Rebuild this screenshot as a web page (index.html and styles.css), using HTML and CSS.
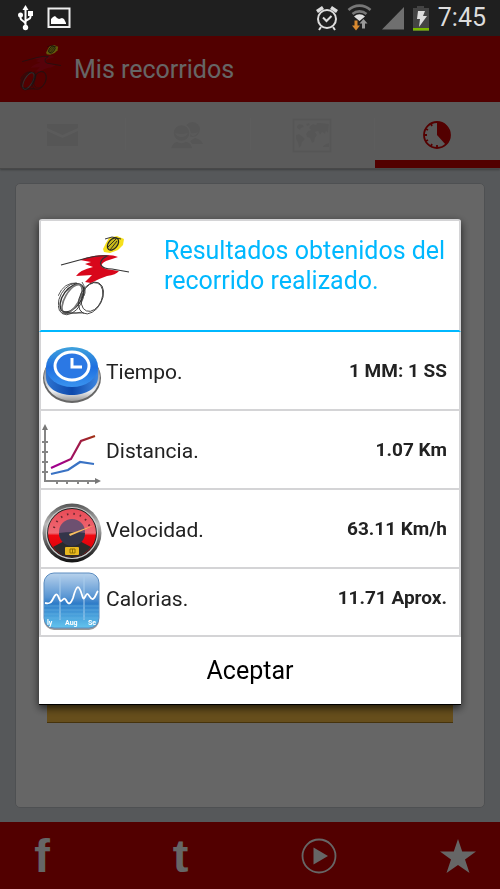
FILE: index.html
```html
<!DOCTYPE html>
<html lang="es">
<head>
    <meta charset="UTF-8">
    <meta name="viewport" content="width=device-width, initial-scale=1.0">
    <title>Mis recorridos</title>
    <link rel="stylesheet" href="styles.css">
</head>
<body>
    <div class="status-bar">
        <div class="status-group">
            <!-- USB -->
            <svg width="18" height="28" viewBox="0 0 18 28" fill="none" stroke="#fff" stroke-width="2">
                <path d="M8.500 4v18M3.500 11v3c0 3 5 3 5 6M13.500 10v3c0 3-5 2-5 5" />
                <path d="M8.500 1l3 5h-6z" fill="#fff" stroke="none" />
                <circle cx="3.500" cy="11" r="2.500" fill="#fff" stroke="none" />
                <rect x="11" y="7" width="5" height="5" fill="#fff" stroke="none" />
                <circle cx="8.500" cy="23.500" r="2.700" fill="#fff" stroke="none" />
            </svg>
            <!-- Picture -->
            <svg width="24" height="22" viewBox="0 0 24 22">
                <rect x="1.500" y="1.500" width="21" height="18.500" fill="none" stroke="#eee" stroke-width="2" />
                <path d="M4 17v-5l2-2 2-1 2 2 2 1 3-1 2 1 2 4v1z" fill="#fff" />
            </svg>
        </div>
        <div class="status-group status-right">
            <!-- Alarm -->
            <svg width="24" height="26" viewBox="0 0 24 26" fill="none" stroke="#ddd" stroke-width="2">
                <circle cx="13" cy="14" r="9" />
                <path d="M9 12.500l3.500 3.500 5-5M7 22l-2 3M19 22l2 3" />
                <path d="M3 6.500l6-4M23 6.500l-6-4" stroke-width="3.500" />
            </svg>
            <!-- Wifi -->
            <svg class="wifi" width="26" height="28" viewBox="0 0 26 28" fill="none" stroke="#777" stroke-width="2.600">
                <path d="M2.500 6a16 16 0 0 1 22 0" />
                <path d="M6.500 10a10.500 10.500 0 0 1 14 0" />
                <path d="M8 12.500a8 8 0 0 1 11 0l-5.500 4.500z" fill="#ddd" stroke="none" />
                <path d="M8.500 16.500h3v5h2.500l-4 5-4-5h2.500z" fill="#d98a30" stroke="none" />
                <path d="M16 24.500h3v-5h2.500l-4-4.500-4 4.500h2.500z" fill="#999" stroke="none" />
            </svg>
            <!-- Signal -->
            <svg width="24" height="24" viewBox="0 0 24 24">
                <path d="M2 23.500L24 1v22.500z" fill="#6f6f6f" />
            </svg>
            <!-- Battery -->
            <svg width="18" height="26" viewBox="0 0 18 26">
                <path d="M5 1h7v2h5v23H1V3h4z" fill="#444" />
                <path d="M6 6h7l-2 5h4l-8 11 1-8H5z" fill="#ddd" />
                <rect x="1" y="23" width="16" height="2.500" fill="#7ab800" />
            </svg>
            <span class="clock">7:45</span>
        </div>
    </div>

    <div class="screen">
        <header class="header">
            <svg class="header-logo" width="42" height="48" viewBox="0 0 72 84"><use href="#cyclist" /></svg>
            <h1>Mis recorridos</h1>
        </header>

        <nav class="tabs">
            <button class="tab" aria-label="Mensajes">
                <svg width="32" height="24" viewBox="0 0 32 24" fill="#d6d6d6">
                    <path d="M0 1h31v4l-15.500 7L0 5z" />
                    <path d="M0 8l15.500 7L31 8v15H0z" />
                </svg>
            </button>
            <button class="tab" aria-label="Amigos">
                <svg width="36" height="28" viewBox="0 0 36 28" fill="#d6d6d6">
                    <circle cx="22.500" cy="8.500" r="7.500" />
                    <path d="M20 20l5-3q6 1 8 6H22z" />
                    <g stroke="#e4e4e4" stroke-width="1.400">
                        <circle cx="11.500" cy="12" r="8.500" />
                        <path d="M0 28q2-7 7-8 4 3 9 0 6 1 7 8z" />
                    </g>
                    <path d="M5 12q6 2 13 0-2 4-6.500 4T5 12zM20 12q5 1 8-1-2 4-6 4z" fill="#e2e2e2" />
                </svg>
            </button>
            <button class="tab" aria-label="Mapa">
                <svg width="42" height="35" viewBox="0 0 42 35" fill="#d8d8d8">
                    <rect x="1.500" y="1.500" width="37" height="32" fill="none" stroke="#d8d8d8" stroke-width="2" />
                    <path d="M5 8l2-2 4 1 1 2-3 1-1 2-3-2zM14 6l3-1 1 2-3 1zM4 17l3-1 3 2 3 3-3 3-1 4-2 2-1-5-2-4zM18 8l3-2 3 1 1-2h4l8 1-1 9-2-2-1 3-3-2-2 3-2-4-3 1 2 3-2 3-1 4-2 1-2-5-3-1-1-3 2-3 3-1-2-2zM31 28l3-2 3-1v4h-6z" />
                </svg>
            </button>
            <button class="tab tab-active" aria-label="Tiempo">
                <svg width="30" height="28" viewBox="0 0 30 28">
                    <circle cx="14" cy="14" r="13" fill="none" stroke="#d00000" stroke-width="1.800" />
                    <path d="M14 14V1a13 13 0 0 1 8.500 22.500z" fill="#d00000" />
                    <path d="M1 14h3M14 27v-3M3 8l2 1M8 3l1 2M3 20l2-1M8 25l1-2" stroke="#d00000" stroke-width="1.800" />
                </svg>
            </button>
        </nav>

        <main class="content">
            <div class="card">
                <div class="card-bar"></div>
            </div>
        </main>

        <footer class="footer">
            <a href="#" aria-label="Facebook"><span class="social">f</span></a>
            <a href="#" aria-label="Twitter"><span class="social">t</span></a>
            <a href="#" aria-label="Video">
                <svg width="36" height="36" viewBox="0 0 36 36">
                    <circle cx="18" cy="18" r="16.500" fill="none" stroke="#fff" stroke-width="1.800" />
                    <path d="M12.500 9.500v17L27 18z" fill="#fff" />
                </svg>
            </a>
            <a href="#" aria-label="Favoritos">
                <svg width="36" height="36" viewBox="0 0 36 36">
                    <path d="M18 1l4.200 12.500H36L25 21.500 29.500 35 18 27 6.500 35 11 21.500 0 13.500h13.800z" fill="#fff" />
                </svg>
            </a>
        </footer>
    </div>

    <div class="overlay">
        <div class="modal" role="dialog" aria-modal="true" aria-labelledby="modalTitle">
            <div class="modal-header">
                <svg class="modal-logo" width="72" height="84" viewBox="0 0 72 84">
                    <g id="cyclist">
                        <path d="M45 13l3-6 3-5 8-2 7 3-1 6-5 5-8 3-6-1z" fill="#f6e01c" />
                        <ellipse cx="55" cy="8" rx="7" ry="4.500" transform="rotate(-50 55 8)" fill="#c8b81a" stroke="#222" stroke-width="1.200" />
                        <path d="M47 3l7-2 9 2M49 12l9-9M52 14l7-9" fill="none" stroke="#222" stroke-width="0.900" />
                        <path d="M22 24q12-5 26-5 8 0 12 2l-12 4q-6 3-4 6l4 2 13 2q-3 4-12 5-9 3-16 7l-6-1 7-7-16 1q4-6 17-9l-8-3 6-2z" fill="#d8061b" />
                        <path d="M3 29l26-7q12-3 20-2-8 4-6 9 2 4 11 4l17 3" fill="none" stroke="#333" stroke-width="1.200" />
                        <g fill="none" stroke="#333" stroke-width="0.800">
                            <ellipse cx="13" cy="63" rx="11" ry="17" transform="rotate(30 13 63)" />
                            <ellipse cx="14" cy="62" rx="9" ry="16" transform="rotate(36 14 62)" stroke-width="1.400" />
                            <ellipse cx="14" cy="63" rx="7" ry="16" transform="rotate(30 14 63)" stroke="#777" stroke-width="1.600" />
                            <ellipse cx="33" cy="62" rx="11" ry="17" transform="rotate(28 33 62)" />
                            <ellipse cx="34" cy="61" rx="10" ry="15" transform="rotate(22 34 61)" />
                            <path d="M0 60q6-14 19-13M2 74q10 5 22 2M4 77h22M24 46q5 8 2 14" />
                        </g>
                    </g>
                </svg>
                <h2 id="modalTitle">Resultados obtenidos del recorrido realizado.</h2>
            </div>

            <ul class="results">
                <li class="result">
                    <svg class="result-icon" width="60" height="60" viewBox="0 0 60 60">
                        <defs>
                            <linearGradient id="chrome" x1="0" y1="0" x2="0" y2="1">
                                <stop offset="0.400" stop-color="#8a8f98" />
                                <stop offset="0.800" stop-color="#f0f2f5" />
                                <stop offset="1" stop-color="#999" />
                            </linearGradient>
                            <linearGradient id="blueTop" x1="0" y1="0" x2="0" y2="1">
                                <stop offset="0" stop-color="#3fa2dc" />
                                <stop offset="0.500" stop-color="#1f6fe0" />
                                <stop offset="1" stop-color="#3a94f0" />
                            </linearGradient>
                            <linearGradient id="blueSide">
                                <stop offset="0" stop-color="#2e74d0" />
                                <stop offset="0.500" stop-color="#0d49ac" />
                                <stop offset="1" stop-color="#3d86e0" />
                            </linearGradient>
                        </defs>
                        <ellipse cx="30" cy="33" rx="29" ry="25" fill="#666" />
                        <ellipse cx="30" cy="31" rx="28" ry="25" fill="url(#chrome)" />
                        <path d="M4 22v10c0 11 12 18 26 18s26-7 26-18V22z" fill="url(#blueSide)" />
                        <ellipse cx="30" cy="22" rx="26" ry="20" fill="url(#blueTop)" />
                        <ellipse cx="30" cy="21" rx="17" ry="14" fill="#2b78e4" stroke="#fff" stroke-width="3" />
                        <path d="M30 13v9h10" fill="none" stroke="#fff" stroke-width="3" />
                    </svg>
                    <span class="result-label">Tiempo.</span>
                    <span class="result-value">1 MM: 1 SS</span>
                </li>
                <li class="result">
                    <svg class="result-icon" width="60" height="60" viewBox="0 0 60 60" fill="none">
                        <defs>
                            <linearGradient id="trend">
                                <stop offset="0.200" stop-color="#a0008c" />
                                <stop offset="1" stop-color="#a03010" />
                            </linearGradient>
                        </defs>
                        <path d="M3 4v53h52M0 18h6M0 28h6M0 38h6M0 48h6M15 60v-4M25 60v-4M36 60v-4M46 60v-4" stroke="#858585" stroke-width="2" />
                        <path d="M0 6l3-6 3 6zM53 54l6 3-6 3z" fill="#777" />
                        <path d="M9 44l20-9 10-18 14-5" stroke="url(#trend)" stroke-width="2.200" />
                        <path d="M9 50l17-4 12-8 14 2" stroke="#3972c4" stroke-width="2.200" />
                    </svg>
                    <span class="result-label">Distancia.</span>
                    <span class="result-value">1.07 Km</span>
                </li>
                <li class="result">
                    <svg class="result-icon" width="60" height="60" viewBox="0 0 60 60">
                        <defs>
                            <linearGradient id="rim" x1="0" y1="0" x2="0" y2="1">
                                <stop offset="0" stop-color="#555" />
                                <stop offset="0.350" stop-color="#bbb" />
                                <stop offset="0.750" stop-color="#444" />
                                <stop offset="1" stop-color="#111" />
                            </linearGradient>
                            <linearGradient id="dial" x1="0" y1="0" x2="0" y2="1">
                                <stop offset="0" stop-color="#e84a56" />
                                <stop offset="0.500" stop-color="#f06a74" />
                                <stop offset="0.550" stop-color="#f00810" />
                                <stop offset="1" stop-color="#d00008" />
                            </linearGradient>
                        </defs>
                        <circle cx="30" cy="30" r="29.500" fill="url(#rim)" />
                        <circle cx="30" cy="30" r="25.500" fill="#222" stroke="#ccc" stroke-width="1.200" />
                        <circle cx="30" cy="30" r="24" fill="url(#dial)" />
                        <path d="M30 34l-19 10q7 10 19 10t19-10z" fill="#2b2b2b" />
                        <circle cx="30" cy="29" r="13" fill="#6d5070" />
                        <path d="M17 30a13 13 0 0 0 26 0q-12-2-26 0z" fill="#34354a" />
                        <path d="M12 25a18.500 18.500 0 0 1 36 0" fill="none" stroke="#6a2830" stroke-width="2" stroke-dasharray="1.500 5" />
                        <path d="M27 31l26-9-25 11z" fill="#f8c060" />
                        <rect x="23" y="44" width="14" height="8" rx="1" fill="#e8b820" />
                        <path d="M28 46h5v4h-5zM30.500 46v4" fill="none" stroke="#907000" />
                    </svg>
                    <span class="result-label">Velocidad.</span>
                    <span class="result-value">63.11 Km/h</span>
                </li>
                <li class="result result-last">
                    <svg class="result-icon" width="60" height="60" viewBox="0 0 60 60">
                        <defs>
                            <linearGradient id="sky" x1="0" y1="0" x2="0" y2="1">
                                <stop offset="0" stop-color="#b8d2ec" />
                                <stop offset="0.450" stop-color="#5593d2" />
                                <stop offset="0.550" stop-color="#2f7cc8" />
                                <stop offset="1" stop-color="#62c4ee" />
                            </linearGradient>
                        </defs>
                        <rect x="2" y="4" width="55" height="54" rx="10" fill="#999" />
                        <rect x="2" y="1" width="55" height="55" rx="10" fill="url(#sky)" stroke="#5a8cc0" />
                        <path d="M18 2v46M42 2v46" stroke="#a9cdec" />
                        <path d="M2 34h55M2 38h55M2 42h55M2 46h55" stroke="#65b2e2" stroke-width="0.600" />
                        <path d="M3 31c5 1 6 0 9-6 4-8 5 5 7 4s3-4 5-1c3 6 5 3 7-2 4-15 6-13 9-3 2 8 3 0 5-1s3 6 6 5c3-2 3-6 5-8" fill="none" stroke="#fff" stroke-width="1.800" />
                        <g class="chart-month" fill="#fff">
                            <text x="5" y="53">ly</text>
                            <text x="23" y="53">Aug</text>
                            <text x="46" y="53">Se</text>
                        </g>
                    </svg>
                    <span class="result-label">Calorias.</span>
                    <span class="result-value">11.71 Aprox.</span>
                </li>
            </ul>

            <button class="modal-btn">Aceptar</button>
        </div>
    </div>
</body>
</html>
```
FILE: styles.css
```css
:root {
    --primary-color: #cd0000;
    --accent-color: #00b8ff;
    --line-color: #d4d4d6;
    --status-height: 36px;
}

* {
    box-sizing: border-box;
    margin: 0;
    padding: 0;
}

body {
    font-family: Roboto, sans-serif;
    display: flex;
    flex-direction: column;
    min-height: 100vh;
    background-color: #d7dce1;
    color: #222;
}

svg {
    display: block;
    flex-shrink: 0;
}

button {
    font-family: inherit;
    border: none;
    background: none;
    cursor: pointer;
}

/* Status bar */
.status-bar {
    display: flex;
    align-items: center;
    justify-content: space-between;
    height: var(--status-height);
    padding: 0 14px 0 17px;
    background-color: #1f1f1f;
}

.status-group {
    display: flex;
    align-items: center;
    gap: 12px;
}

.status-right {
    gap: 8px;
}

.clock {
    color: #ddd;
    font-size: 25px;
    line-height: 34px;
}

/* App screen */
.screen {
    flex: 1;
    display: flex;
    flex-direction: column;
}

.header {
    display: flex;
    align-items: center;
    gap: 12px;
    height: 66px;
    padding: 0 20px;
    background-color: var(--primary-color);
}

.header h1 {
    color: #fff;
    font-size: 25px;
    font-weight: 400;
}

.tabs {
    display: flex;
    height: 67px;
    background: linear-gradient(#e8e8e8, #e8e8e8) 25% 16px / 1px 32px no-repeat,
        linear-gradient(#e8e8e8, #e8e8e8) 50% 16px / 1px 32px no-repeat,
        linear-gradient(#e8e8e8, #e8e8e8) 75% 16px / 1px 32px no-repeat,
        #e4e4e4;
    border-bottom: 1px solid #b4b4b4;
    box-shadow: 0 1px 2px rgba(0, 0, 0, 0.3);
}

.tab {
    flex: 1;
    display: flex;
    align-items: center;
    justify-content: center;
    border-bottom: 8px solid transparent;
    padding-top: 8px;
}

.tab-active {
    border-bottom-color: var(--primary-color);
}

.content {
    flex: 1;
    display: flex;
    padding: 14px 15px;
}

.card {
    flex: 1;
    display: flex;
    align-items: flex-end;
    padding: 0 31px 84px;
    background-color: #fff;
    border: 1px solid #c4c8cc;
    border-radius: 5px;
}

.card-bar {
    flex: 1;
    height: 60px;
    background-color: #ffc346;
    border-bottom: 1px solid #b08020;
}

.footer {
    display: flex;
    justify-content: space-between;
    align-items: center;
    height: 67px;
    padding: 0 24px;
    background-color: var(--primary-color);
}

.footer a {
    display: flex;
    justify-content: center;
    width: 36px;
    color: #fff;
    text-decoration: none;
}

.social {
    font-family: "Liberation Sans", sans-serif;
    font-size: 47px;
    font-weight: 700;
    line-height: 48px;
}

/* Results dialog */
.overlay {
    position: fixed;
    top: var(--status-height);
    right: 0;
    bottom: 0;
    left: 0;
    display: flex;
    align-items: center;
    justify-content: center;
    padding: 0 39px 2px;
    background-color: rgba(0, 0, 0, 0.6);
}

.modal {
    flex: 1;
    background-color: #fff;
    border-top: 2px solid var(--line-color);
    border-bottom: 1px solid #000;
    border-radius: 3px 3px 0 0;
    box-shadow: 0 3px 8px rgba(0, 0, 0, 0.7);
}

.modal-header {
    display: flex;
    align-items: flex-start;
    gap: 34px;
    height: 111px;
    padding: 15px 8px 0 17px;
    border: solid var(--line-color);
    border-width: 0 2px;
    border-bottom: 2px solid var(--accent-color);
}

.modal-header h2 {
    color: var(--accent-color);
    font-size: 25px;
    font-weight: 400;
    line-height: 30px;
}

.results {
    list-style: none;
    border: solid var(--line-color);
    border-width: 0 2px;
}

.result {
    display: flex;
    align-items: flex-start;
    gap: 4px;
    height: 79px;
    padding: 13px 12px 0 1px;
    border-bottom: 2px solid var(--line-color);
}

.result-last {
    height: 68px;
    padding-top: 3px;
}

.result-label {
    flex: 1;
    font-size: 21px;
    line-height: 54px;
}

.result-value {
    font-size: 19px;
    font-weight: 700;
    line-height: 52px;
}

.chart-month {
    font-size: 7px;
    font-weight: 700;
}

.modal-btn {
    display: block;
    width: 100%;
    height: 67px;
    color: #000;
    font-size: 25px;
}
```
